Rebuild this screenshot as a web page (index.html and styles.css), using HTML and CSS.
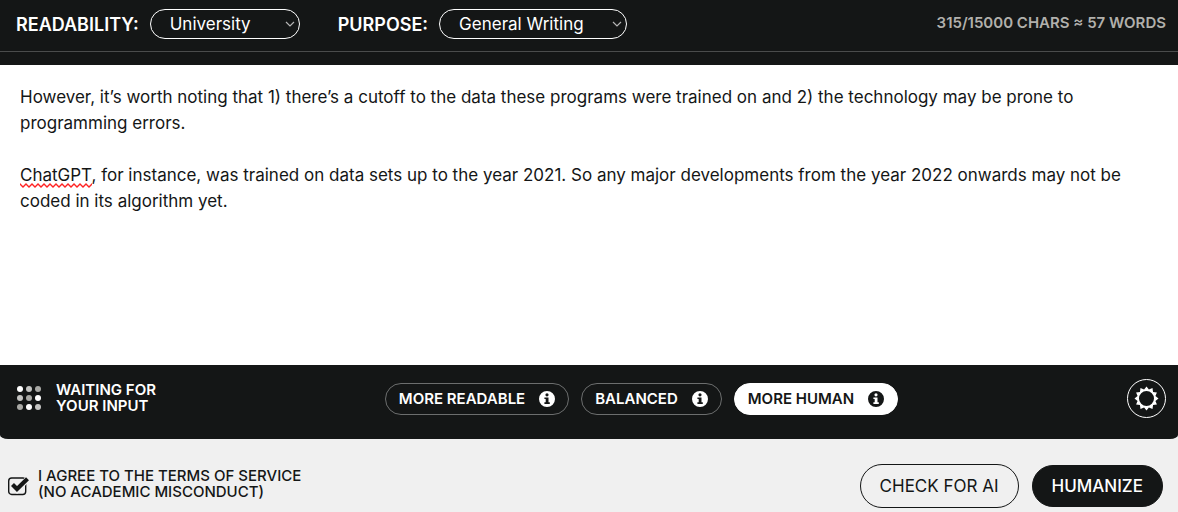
FILE: index.html
```html
<!DOCTYPE html>
<html lang="en">
<head>
<meta charset="utf-8">
<meta name="viewport" content="width=device-width, initial-scale=1">
<title>Humanizer</title>
<link rel="stylesheet" href="styles.css">
</head>
<body>
<svg class="defs" aria-hidden="true">
  <symbol id="info" viewBox="0 0 16 16">
    <path fill-rule="evenodd" d="M8 0a8 8 0 1 0 0 16A8 8 0 0 0 8 0zM8 2.200a1.600 1.600 0 1 1 0 3.200 1.600 1.600 0 0 1 0-3.200zM5.400 6.400H9.500V11.300H10.800V13H5.400V11.300H6.700V8.100H5.400z"/>
  </symbol>
  <symbol id="chevron" viewBox="0 0 10 6">
    <path d="M1 1l4 4 4-4" fill="none" stroke="currentColor" stroke-width="1.2"/>
  </symbol>
</svg>
<main class="app">
  <section class="panel">
    <header class="options">
      <div class="field">
        <label class="field-label" for="readability">READABILITY:</label>
        <span class="picker">
          <select class="select select-level" id="readability"><option>University</option></select>
          <svg class="chevron" aria-hidden="true"><use href="#chevron"/></svg>
        </span>
      </div>
      <div class="field">
        <label class="field-label" for="purpose">PURPOSE:</label>
        <span class="picker">
          <select class="select" id="purpose"><option>General Writing</option></select>
          <svg class="chevron" aria-hidden="true"><use href="#chevron"/></svg>
        </span>
      </div>
      <p class="counter">315/15000 CHARS ≈ 57 WORDS</p>
    </header>
    <div class="editor">
      <textarea class="editor-text" aria-label="Text to humanize" spellcheck="false">However, it’s worth noting that 1) there’s a cutoff to the data these programs were trained on and 2) the technology may be prone to programming errors.

ChatGPT, for instance, was trained on data sets up to the year 2021. So any major developments from the year 2022 onwards may not be coded in its algorithm yet.</textarea>
      <svg class="squiggle" aria-hidden="true">
        <defs><pattern id="wave" width="6" height="5" patternUnits="userSpaceOnUse"><path d="M-3 4L0 1L3 4L6 1L9 4" fill="none" stroke="#f22" stroke-width="1.300"/></pattern></defs>
        <rect width="100%" height="100%" fill="url(#wave)"/>
      </svg>
    </div>
    <div class="status">
      <div class="waiting">
        <svg class="dots" viewBox="0 0 24 24" aria-hidden="true">
          <g fill="#fff"><circle cx="3" cy="3" r="3"/><circle cx="21" cy="12" r="3"/><circle cx="12" cy="21" r="3"/></g>
          <g fill="#c4c4c2"><circle cx="12" cy="3" r="3"/><circle cx="3" cy="12" r="3"/><circle cx="21" cy="21" r="3"/></g>
          <g fill="#a9a9a5"><circle cx="21" cy="3" r="3"/><circle cx="12" cy="12" r="3"/><circle cx="3" cy="21" r="3"/></g>
        </svg>
        <p class="waiting-text">WAITING FOR<br>YOUR INPUT</p>
      </div>
      <div class="modes">
        <button class="mode" type="button">MORE READABLE<svg class="info" aria-hidden="true"><use href="#info"/></svg></button>
        <button class="mode" type="button">BALANCED<svg class="info" aria-hidden="true"><use href="#info"/></svg></button>
        <button class="mode mode-active" type="button" aria-pressed="true">MORE HUMAN<svg class="info" aria-hidden="true"><use href="#info"/></svg></button>
      </div>
      <button class="settings" type="button" aria-label="Settings">
        <svg class="gear" viewBox="-13 -13 26 26" aria-hidden="true">
          <path fill="#fff" fill-rule="evenodd" d="M12.500 0L9.300 2.490L10.830 6.250L6.810 6.810L6.250 10.830L2.490 9.300L0 12.500L-2.490 9.300L-6.250 10.830L-6.810 6.810L-10.830 6.250L-9.300 2.490L-12.500 0L-9.300-2.490L-10.830-6.250L-6.810-6.810L-6.250-10.830L-2.490-9.300L0-12.500L2.490-9.300L6.250-10.830L6.810-6.810L10.830-6.250L9.300-2.490zM0-7.800a7.800 7.800 0 1 0 0 15.600a7.800 7.800 0 0 0 0-15.600z"/>
        </svg>
      </button>
    </div>
  </section>
  <footer class="actions">
    <label class="agree">
      <input class="agree-box" type="checkbox" checked>
      <svg class="agree-icon" viewBox="0 0 22 20" aria-hidden="true">
        <rect x="0.700" y="2" width="17" height="16.500" rx="3" fill="none" stroke="#141616" stroke-width="1.400"/>
        <path d="M4.500 9.500L9 13.800L19.500 3" fill="none" stroke="#f0f0f0" stroke-width="6"/>
        <path d="M4.500 8.500L9 13L19.500 2.800" fill="none" stroke="#141616" stroke-width="4.200"/>
      </svg>
      <span class="agree-text">I AGREE TO THE TERMS OF SERVICE<br>(NO ACADEMIC MISCONDUCT)</span>
    </label>
    <div class="buttons">
      <button class="button" type="button">CHECK FOR AI</button>
      <button class="button button-primary" type="button">HUMANIZE</button>
    </div>
  </footer>
</main>
</body>
</html>
```
FILE: styles.css
```css
* {
  box-sizing: border-box;
}

body {
  margin: 0;
  background: #f0f0f0;
  color: #141616;
  font-family: Inter, "Liberation Sans", sans-serif;
}

p {
  margin: 0;
}

button,
select,
textarea {
  font: inherit;
  color: inherit;
}

.defs {
  position: absolute;
  width: 0;
  height: 0;
}

.app {
  display: flex;
  flex-direction: column;
  min-height: 100vh;
}

.panel {
  display: flex;
  flex: 1;
  flex-direction: column;
  overflow: hidden;
  border-radius: 0 0 8px 8px / 0 0 4px 4px;
  background: #141616;
  color: #fff;
}

.options {
  display: flex;
  align-items: center;
  gap: 38px;
  margin-bottom: 13px;
  padding: 9px 12px 12px 16px;
  border-bottom: 1px solid #4a4c4c;
}

.field {
  display: flex;
  align-items: center;
  gap: 11px;
}

.field-label {
  font-size: 18px;
  font-weight: 600;
}

.picker {
  position: relative;
}

.select {
  display: block;
  height: 30px;
  padding: 0 42px 0 19px;
  border: 1px solid #fff;
  border-radius: 15px;
  appearance: none;
  background: transparent;
  font-size: 17px;
}

.select-level {
  padding-right: 48px;
}

.chevron {
  position: absolute;
  top: 12px;
  right: 5px;
  width: 10px;
  height: 6px;
  color: #b5b5b5;
}

.counter {
  margin-left: auto;
  padding-bottom: 3px;
  color: #b1b0ac;
  font-size: 15px;
  font-weight: 600;
}

.editor {
  position: relative;
  display: flex;
  flex: 1;
}

.editor-text {
  width: 100%;
  padding: 19px 20px;
  border: 0;
  outline: 0;
  resize: none;
  background: #fff;
  color: #141616;
  font-size: 17px;
  line-height: 26px;
}

.squiggle {
  position: absolute;
  top: 118px;
  left: 20px;
  width: 72px;
  height: 5px;
}

.status {
  display: flex;
  align-items: center;
  justify-content: space-between;
  padding: 14px 12px 21px 17px;
}

.waiting {
  display: flex;
  align-items: center;
  gap: 15px;
  padding-bottom: 2px;
}

.dots {
  width: 24px;
  height: 24px;
}

.waiting-text {
  font-size: 15px;
  font-weight: 600;
  line-height: 16px;
}

.modes {
  display: flex;
  gap: 12px;
}

.mode {
  display: flex;
  align-items: center;
  gap: 14px;
  height: 32px;
  padding: 0 13px;
  border: 1px solid #6c6e6e;
  border-radius: 16px;
  background: transparent;
  font-size: 15px;
  font-weight: 600;
}

.mode-active {
  border-color: #fff;
  background: #fff;
  color: #141616;
}

.info {
  width: 16px;
  height: 16px;
  fill: currentColor;
}

.settings {
  display: grid;
  place-items: center;
  width: 39px;
  height: 39px;
  padding: 0;
  border: 1px solid #fff;
  border-radius: 50%;
  background: transparent;
}

.gear {
  width: 25px;
  height: 25px;
}

.actions {
  display: flex;
  align-items: center;
  justify-content: space-between;
  padding: 25px 15px 4px 8px;
}

.agree {
  position: relative;
  display: flex;
  align-items: center;
  gap: 8px;
  font-size: 15px;
  font-weight: 500;
  line-height: 16px;
}

.agree-box {
  position: absolute;
  width: 22px;
  height: 20px;
  margin: 0;
  opacity: 0;
}

.agree-icon {
  width: 22px;
  height: 20px;
}

.agree-text {
  padding-bottom: 4px;
}

.buttons {
  display: flex;
  align-items: center;
  gap: 13px;
}

.button {
  height: 44px;
  padding: 0 19px;
  border: 1px solid #141616;
  border-radius: 22px;
  background: transparent;
  font-size: 17px;
}

.button-primary {
  height: 42px;
  background: #141616;
  color: #fff;
  font-weight: 500;
}
```
